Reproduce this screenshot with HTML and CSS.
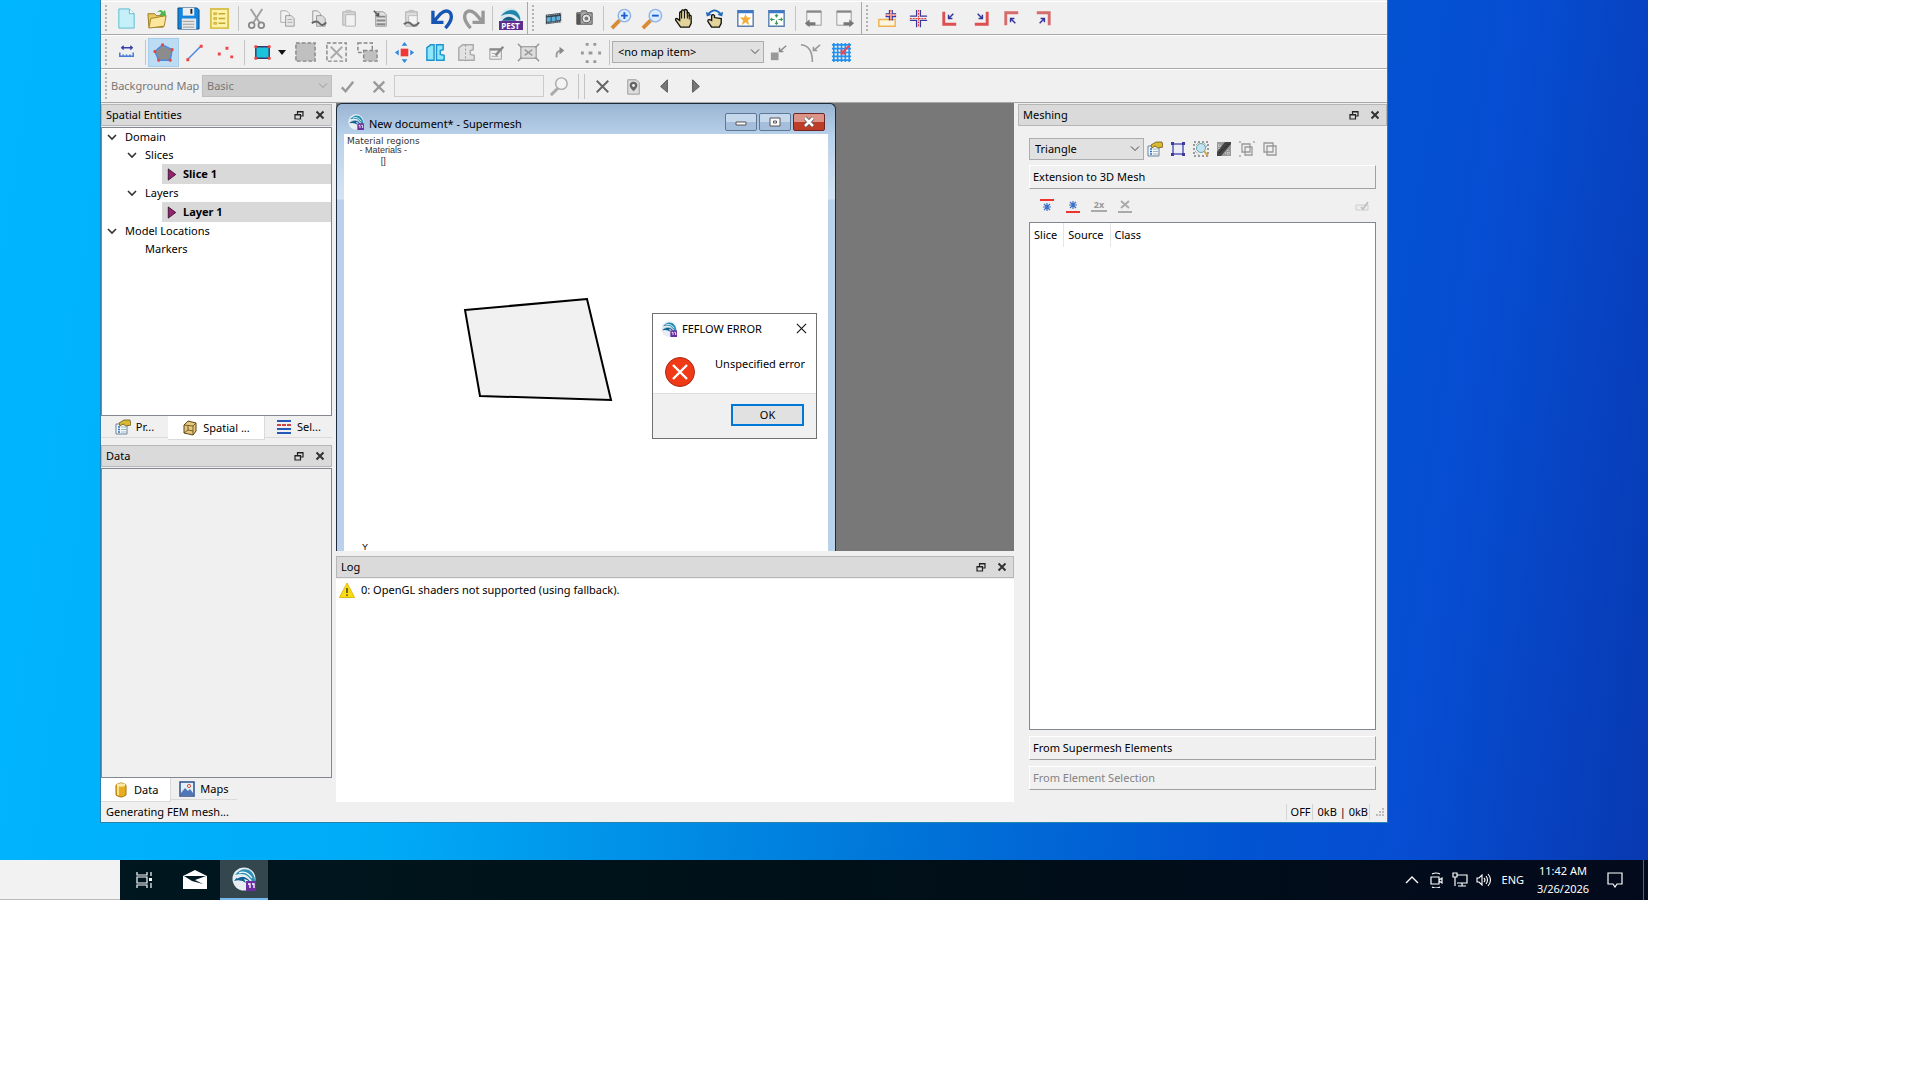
FILE: index.html
```html
<!DOCTYPE html>
<html lang="en">
<head>
  <meta charset="UTF-8" />
  <meta name="viewport" content="width=device-width, initial-scale=1.0"/>
  <title>FEFLOW - Supermesh</title>
  <link rel="stylesheet" href="styles.css">
</head>
<body>
  <!-- Shared icons -->
  <svg class="sprite" aria-hidden="true">
    <symbol id="logo" viewBox="0 0 24 24">
      <circle cx="12" cy="12" r="11.5" fill="#e6eef2"/>
      <path d="M3 8Q9 0 17 3Q22 6 23 13L21 20Q20 11 14 8Q9 6 3 8Z" fill="#2a91b5"/>
      <path d="M2 14Q6 8 12 9Q19 10 20 18Q16 12 12 12L14 16Q9 12 2 14Z" fill="#12618f"/>
      <path d="M7 6Q14 3 20 11M5 11Q12 6 19 14" fill="none" stroke="#fff" stroke-width="1.2"/>
      <path d="M14 14H24V24H14Z" fill="#6b2fa0"/>
      <path d="M16 17H18V21M20 17H22V21" fill="none" stroke="#fff" stroke-width="1.3"/>
    </symbol>
    <symbol id="float" viewBox="0 0 10 10">
      <path d="M3.500 4V1.500H9V6H7M3.500 2H9M1 4.500H6.500V9H1ZM1 5H6.500" fill="none" stroke="#222" stroke-width="1.200"/>
    </symbol>
    <symbol id="close" viewBox="0 0 10 10">
      <path d="M1.500 1.500L8.500 8.500M8.500 1.500L1.500 8.500" stroke="#333" stroke-width="2"/>
    </symbol>
    <symbol id="props" viewBox="0 0 16 16">
      <path d="M1 5H12V15H1Z" fill="#f4f8fc" stroke="#6d8296"/>
      <path d="M3 8H5M3 10.500H5M3 13H5" stroke="#2a70c0" stroke-width="1.300"/>
      <path d="M6 8H11M6 10.500H11M6 13H11" stroke="#9bb"/>
      <path d="M4 4L9 1L15 1L16 6L11 7L8 5L5 7Z" fill="#d9b832" stroke="#6b5a18" stroke-width=".8"/>
    </symbol>
    <symbol id="chevron" viewBox="0 0 10 10">
      <path d="M1 3L5 7L9 3" fill="none" stroke="#333" stroke-width="1.600"/>
    </symbol>
    <symbol id="arrow" viewBox="0 0 10 14">
      <path d="M1 1L9 7L1 13Z" fill="#98206c" stroke="#3b1030"/>
    </symbol>
    <symbol id="hand" viewBox="0 0 24 24">
      <path d="M9 21L4 14Q3 12 5 12L8 14V6Q9 4 10 6V4Q11 2 13 4V3Q15 2 16 4V6Q18 5 18 8V9Q20 8 20 10V17L18 21Z" fill="#e2d49b" stroke="#111" stroke-width="1.400"/>
      <path d="M10 6V12M13 4V12M16 5V12M18 8V13" stroke="#111" stroke-width="1.100"/>
    </symbol>
  </svg>

  <div class="desktop">
    <div class="workspace">
      <main class="app">
        <div class="toolbars">
          <div class="toolbar">
            <div class="group">
              <span class="handle"></span>
              <button class="tool" aria-label="New"><svg viewBox="0 0 24 24"><path d="M4 2H15L20 7V22H4Z" fill="#c5f0fa" stroke="#58bcd0"/><path d="M15 2V7H20" fill="#fff" stroke="#58bcd0"/></svg></button>
              <button class="tool" aria-label="Open"><svg viewBox="0 0 24 24"><path d="M2 7H9L11 9H18V21H3Z" fill="#e8c760" stroke="#9a7a20"/><path d="M5 12L21 9L19 20L3 22Z" fill="#fbe69c" stroke="#a5821f"/><path d="M11 6Q15 1 18 5L20 3L21 10L14 8L16 6Q14 4 11 6Z" fill="#4db650"/></svg></button>
              <button class="tool" aria-label="Save"><svg viewBox="0 0 24 24"><path d="M1 1H21L23 3V23H1Z" fill="#1185e0" stroke="#134a80"/><path d="M6 1H18V9H6Z" fill="#eee"/><path d="M14 2H16V7H14Z" fill="#222"/><path d="M5 12H20V23H5Z" fill="#e8e8e8"/><path d="M6 15H18M6 18H18M6 21H18" stroke="#999"/></svg></button>
              <button class="tool" aria-label="Problem settings"><svg viewBox="0 0 24 24"><path d="M3 2H21V22H3Z" fill="#fdf2a6" stroke="#d9c350" stroke-width="2"/><path d="M6 6H9V8H6ZM6 11H9V13H6ZM6 16H9V18H6Z" fill="#e8cf50" stroke="#b79c28" stroke-width=".6"/><path d="M11 7H18M11 12H18M11 17H18" stroke="#c6a92f" stroke-width="1.500"/></svg></button>
              <span class="sep"></span>
              <button class="tool" aria-label="Cut"><svg viewBox="0 0 24 24"><path d="M6 2L15 16M18 2L9 16" stroke="#a0a0a0" stroke-width="2"/><circle cx="7" cy="19" r="3" fill="none" stroke="#888" stroke-width="1.800"/><circle cx="17" cy="19" r="3" fill="none" stroke="#888" stroke-width="1.800"/></svg></button>
              <button class="tool" aria-label="Copy"><svg viewBox="0 0 24 24"><path d="M5 4H11L14 7V16H5Z" fill="#f2f2f2" stroke="#aaa"/><path d="M10 9H16L19 12V20H10Z" fill="#e6e6e6" stroke="#999"/><path d="M12 13H17M12 16H17" stroke="#aaa"/></svg></button>
              <button class="tool" aria-label="Copy map"><svg viewBox="0 0 24 24"><path d="M6 4H11L14 7V16H6Z" fill="#eee" stroke="#999"/><path d="M10 9H16L19 12V20H10Z" fill="#ddd" stroke="#999"/><path d="M5 17Q10 13 13 17T20 16" fill="none" stroke="#666" stroke-width="2"/></svg></button>
              <button class="tool" aria-label="Paste"><svg viewBox="0 0 24 24"><path d="M5 5H18V19H5Z" fill="#d8d8d8" stroke="#b0b0b0"/><path d="M8 3H14V6H8Z" fill="#c4c4c4"/><path d="M8 8H18V20H8Z" fill="#f2f2f2" stroke="#b4b4b4"/></svg></button>
              <button class="tool" aria-label="Paste values"><svg viewBox="0 0 24 24"><path d="M7 5H15L18 8V20H7Z" fill="#e2e2e2" stroke="#999"/><path d="M8 10H17M8 14H17M8 18H17" stroke="#888" stroke-width="2"/><path d="M5 4L10 9M10 6V9H7" stroke="#555" fill="none" stroke-width="1.500"/></svg></button>
              <button class="tool" aria-label="Paste map"><svg viewBox="0 0 24 24"><path d="M6 5H18V20H6Z" fill="#ddd" stroke="#aaa"/><path d="M9 3H15V6H9Z" fill="#c2c2c2"/><path d="M9 9H18V18H9Z" fill="#f4f4f4" stroke="#bbb"/><path d="M4 18Q9 14 12 18T20 16" fill="none" stroke="#666" stroke-width="2"/></svg></button>
              <button class="tool" aria-label="Undo"><svg viewBox="0 0 24 24"><path d="M2 4V16H13M3 15L10 7Q16 2 20 6Q24 12 15 22" fill="none" stroke="#1755b5" stroke-width="3.500"/></svg></button>
              <button class="tool" aria-label="Redo"><svg viewBox="0 0 24 24"><path d="M22 4V16H11M21 15L14 7Q8 2 4 6Q0 12 9 22" fill="none" stroke="#989898" stroke-width="3.500"/></svg></button>
              <span class="sep"></span>
              <button class="tool pest" aria-label="FePEST"><svg viewBox="0 0 24 14"><path d="M1 14Q1 1 12 1T23 14Z" fill="#dbe9ee"/><path d="M2 9Q10 0 18 4Q23 9 22 14Q17 6 10 7Q6 7 2 9Z" fill="#1f87ad"/><path d="M3 14Q9 7 16 12L18 14Z" fill="#1a5e86"/></svg><b>PEST</b></button>
            </div>
            <div class="group">
              <span class="handle"></span>
              <button class="tool" aria-label="Film"><svg viewBox="0 0 24 24"><path d="M4 8L20 6V16L4 18Z" fill="#344250"/><path d="M5 11L9 10.500V15L5 15.500ZM10 10.500L14 10V14.500L10 15ZM15 10L19 9.500V13.500L15 14Z" fill="#5fb2dd"/><path d="M5 9L20 7M5 17L20 15" stroke="#ccc" stroke-dasharray="1 1"/></svg></button>
              <button class="tool" aria-label="Snapshot"><svg viewBox="0 0 24 24"><path d="M4 6H8L9 4H14L15 6H20V18H4Z" fill="#a2a5a8" stroke="#555"/><path d="M4 7H8V18H4Z" fill="#555"/><circle cx="14" cy="12" r="4.500" fill="#e8e8e8" stroke="#555"/><circle cx="14" cy="12" r="2" fill="#777"/></svg></button>
              <span class="sep"></span>
              <button class="tool" aria-label="Zoom in"><svg viewBox="0 0 24 24"><path d="M2 22L10 14" stroke="#d98a35" stroke-width="4"/><circle cx="15" cy="9" r="6.500" fill="#dcecff" stroke="#8eb4e8" stroke-width="1.500"/><path d="M11.500 9H18.500M15 5.500V12.500" stroke="#1b5ecf" stroke-width="2"/></svg></button>
              <button class="tool" aria-label="Zoom out"><svg viewBox="0 0 24 24"><path d="M2 22L10 14" stroke="#d98a35" stroke-width="4"/><circle cx="15" cy="9" r="6.500" fill="#dcecff" stroke="#8eb4e8" stroke-width="1.500"/><path d="M11.500 9H18.500" stroke="#1b5ecf" stroke-width="2"/></svg></button>
              <button class="tool" aria-label="Pan"><svg><use href="#hand"/></svg></button>
              <button class="tool" aria-label="Rotate"><svg viewBox="0 0 24 24"><path d="M9 21L5 15Q5 12 9 14V9Q10 7 12 9V11L19 12V17L17 21Z" fill="#e2d49b" stroke="#111" stroke-width="1.400"/><path d="M6 7Q12 0 18 7" fill="none" stroke="#2068b8" stroke-width="2"/><path d="M3 5L4 10L9 8ZM21 5L20 10L15 8Z" fill="#2068b8"/></svg></button>
              <button class="tool" aria-label="Bookmark view"><svg viewBox="0 0 24 24"><path d="M4 4H20V20H4Z" fill="#fff" stroke="#5b7fae" stroke-width="1.500"/><path d="M4 5H20" stroke="#3c78c8" stroke-width="3"/><path d="M12 7L13.500 11H18L14.500 14L16 19L12 16L8 19L9.500 14L6 11H10.500Z" fill="#f3ac36"/></svg></button>
              <button class="tool" aria-label="Full view"><svg viewBox="0 0 24 24"><path d="M4 4H20V20H4Z" fill="#fff" stroke="#5b7fae" stroke-width="1.500"/><path d="M4 5H20" stroke="#3c78c8" stroke-width="3"/><path d="M12 8V11M12 14V18M6 13H10M14 13H18M10.500 9.500L12 8L13.500 9.500M10.500 16.500L12 18L13.500 16.500M7.500 11.500L6 13L7.500 14.500M16.500 11.500L18 13L16.500 14.500" fill="none" stroke="#3a9a50" stroke-width="1.200"/></svg></button>
              <span class="sep"></span>
              <button class="tool" aria-label="Previous view"><svg viewBox="0 0 24 24"><path d="M5 4H20V19H5Z" fill="#f4f4f4" stroke="#999"/><path d="M5 5H20" stroke="#888" stroke-width="2"/><path d="M3 17L8 13V16H14V19H8V21Z" fill="#777"/></svg></button>
              <button class="tool" aria-label="Next view"><svg viewBox="0 0 24 24"><path d="M4 4H19V19H4Z" fill="#f4f4f4" stroke="#999"/><path d="M4 5H19" stroke="#888" stroke-width="2"/><path d="M22 17L17 13V16H11V19H17V21Z" fill="#777"/></svg></button>
            </div>
            <div class="group last">
              <span class="handle"></span>
              <button class="tool" aria-label="Add section"><svg viewBox="0 0 24 24"><path d="M3 13H20V20H3Z" fill="#fff4e0" stroke="#efb24c" stroke-width="1.500"/><path d="M14 3V7H10M17 3V7H21M14 14V10H10M17 14V10H21" fill="none" stroke="#39399b" stroke-width="1.200"/><path d="M15.500 3V14M10 8.500H21" stroke="#e33" stroke-dasharray="2 1"/></svg></button>
              <button class="tool" aria-label="Center section"><svg viewBox="0 0 24 24"><path d="M10 3V9.500H3M14 3V9.500H21M10 21V14H3M14 21V14H21" fill="none" stroke="#39399b" stroke-width="1.300"/><path d="M12 3V21M3 12H21" stroke="#e33" stroke-width="1.200" stroke-dasharray="2 1"/></svg></button>
              <button class="tool" aria-label="Bottom left"><svg viewBox="0 0 24 24"><path d="M6 5V18H19" fill="none" stroke="#dd5050" stroke-width="3"/><path d="M16 7L11 12M11 8V12H15" fill="none" stroke="#33339b" stroke-width="1.500"/></svg></button>
              <button class="tool" aria-label="Bottom right"><svg viewBox="0 0 24 24"><path d="M19 5V18H6" fill="none" stroke="#dd5050" stroke-width="3"/><path d="M9 7L14 12M14 8V12H10" fill="none" stroke="#33339b" stroke-width="1.500"/></svg></button>
              <button class="tool" aria-label="Top left"><svg viewBox="0 0 24 24"><path d="M6 19V6H19" fill="none" stroke="#d46c6c" stroke-width="3"/><path d="M16 17L11 12M11 16V12H15" fill="none" stroke="#33339b" stroke-width="1.500"/></svg></button>
              <button class="tool" aria-label="Top right"><svg viewBox="0 0 24 24"><path d="M19 19V6H6" fill="none" stroke="#d46c6c" stroke-width="3"/><path d="M9 17L14 12M14 16V12H10" fill="none" stroke="#33339b" stroke-width="1.500"/></svg></button>
            </div>
          </div>

          <div class="toolbar">
            <div class="group last">
              <span class="handle"></span>
              <button class="tool" aria-label="Measure"><svg viewBox="0 0 24 24"><path d="M7 7H18M9 5L7 7L9 9M16 5L18 7L16 9" fill="none" stroke="#3b3bab" stroke-width="1.400"/><path d="M5 12V16H19V12M8.500 14V16M12 14V16M15.500 14V16" fill="none" stroke="#477bd8" stroke-width="1.600"/></svg></button>
              <span class="sep"></span>
              <button class="tool active" aria-label="Polygon"><svg viewBox="0 0 24 24"><path d="M11 4L21 9L19 20H7L3 11Z" fill="#8c8c8c" stroke="#4a8ae0" stroke-width="1.500"/><path d="M10 3H12V5H10ZM20 8H22V10H20ZM18 19H20V21H18ZM6 19H8V21H6ZM2 10H4V12H2Z" fill="#e44" stroke="#e44"/></svg></button>
              <button class="tool" aria-label="Line"><svg viewBox="0 0 24 24"><path d="M5 19L18 6" stroke="#4a8ae0" stroke-width="1.600"/><path d="M3.500 18H6.500V21H3.500ZM17.500 4H20.500V7H17.500Z" fill="#e44"/></svg></button>
              <button class="tool" aria-label="Point"><svg viewBox="0 0 24 24"><path d="M4 12H7V15H4ZM12 6H15V9H12ZM17 15H20V18H17Z" fill="#e44"/></svg></button>
              <span class="sep"></span>
              <button class="tool" aria-label="Rectangle"><svg viewBox="0 0 24 24"><path d="M5 6H19V18H5Z" fill="#1cc3dc" stroke="#333c6a" stroke-width="1.500"/><path d="M4 5H6V7H4ZM18 5H20V7H18ZM4 17H6V19H4ZM18 17H20V19H18Z" fill="#e44" stroke="#e44"/></svg></button>
              <button class="drop" aria-label="More shapes"><svg viewBox="0 0 8 5"><path d="M0 0H8L4 5Z" fill="#111"/></svg></button>
              <button class="tool" aria-label="Select all"><svg viewBox="0 0 24 24"><path d="M2 2H22V21H2Z" fill="#c0c0c0" stroke="#888" stroke-width="1.500" stroke-dasharray="4 2"/></svg></button>
              <button class="tool" aria-label="Clear selection"><svg viewBox="0 0 24 24"><path d="M2 2H22V21H2Z" fill="none" stroke="#888" stroke-width="1.500" stroke-dasharray="4 2"/><path d="M6 6L18 18M18 6L6 18" stroke="#aaa" stroke-width="2"/></svg></button>
              <button class="tool" aria-label="Invert selection"><svg viewBox="0 0 24 24"><path d="M2 2H17V12H2Z" fill="none" stroke="#888" stroke-width="1.500" stroke-dasharray="4 2"/><path d="M8 10H22V21H8Z" fill="#c0c0c0" stroke="#888" stroke-width="1.500" stroke-dasharray="4 2"/></svg></button>
              <span class="sep"></span>
              <button class="tool" aria-label="Move"><svg viewBox="0 0 24 24"><path d="M8 8H16V16H8Z" fill="#ee3838"/><path d="M12 1L15 5H9ZM12 23L15 19H9ZM2 12L6 9V15ZM22 12L18 9V15Z" fill="#2d87dc"/></svg></button>
              <button class="tool" aria-label="Split"><svg viewBox="0 0 24 24"><path d="M10.500 4H7L3 7V20H10.500ZM13 4H20V9L17 10V14L21 15V20H13Z" fill="#8ce7f8" stroke="#1d93cf" stroke-width="1.500"/></svg></button>
              <button class="tool" aria-label="Join"><svg viewBox="0 0 24 24"><path d="M4 7L8 4H19V9L16 10V14L20 15V20H4Z" fill="#e2e2e2" stroke="#aaa" stroke-width="1.500"/><path d="M11 4V21" stroke="#999" stroke-dasharray="2 2"/></svg></button>
              <button class="tool" aria-label="Edit"><svg viewBox="0 0 24 24"><path d="M4 8H16V19H4Z" fill="#f0f0f0" stroke="#999"/><path d="M4 9H16" stroke="#888" stroke-width="2"/><path d="M10 15L18 6" stroke="#888" stroke-width="2.500"/><path d="M6 13H10M6 16H13" stroke="#aaa"/></svg></button>
              <button class="tool" aria-label="Scale"><svg viewBox="0 0 24 24"><path d="M4 6H20V18H4Z" fill="#ddd" stroke="#888"/><path d="M1 3L5 7M23 3L19 7M1 21L5 17M23 21L19 17M8 9L16 15M16 9L8 15" stroke="#999" stroke-width="1.500"/></svg></button>
              <button class="tool" aria-label="Rotate item"><svg viewBox="0 0 24 24"><path d="M9 17Q8 10 14 10" fill="none" stroke="#999" stroke-width="2"/><path d="M12 6L17 10L12 14Z" fill="#888"/></svg></button>
              <button class="tool" aria-label="Distribute"><svg viewBox="0 0 24 24"><path d="M7 2H10V5H7ZM15 2H18V5H15ZM2 11H5V14H2ZM10 11H14V14H10ZM20 11H23V14H20ZM7 20H10V23H7ZM15 20H18V23H15Z" fill="#999"/></svg></button>
              <span class="sep"></span>
              <select class="combo map-item" aria-label="Map item"><option>&lt;no map item&gt;</option></select>
              <button class="tool" aria-label="Snap to point"><svg viewBox="0 0 24 24"><path d="M3 12H11V20H3Z" fill="#999"/><path d="M19 5L12 11M12 7V11H16" fill="none" stroke="#888" stroke-width="1.500"/></svg></button>
              <button class="tool" aria-label="Snap to line"><svg viewBox="0 0 24 24"><path d="M2 4Q14 5 14 22M22 4L15 10M15 6V10H19" fill="none" stroke="#999" stroke-width="1.600"/></svg></button>
              <button class="tool" aria-label="Snap to grid"><svg viewBox="0 0 24 24"><path d="M2 4H22M2 8H22M2 12H22M2 16H22M2 20H22M4 2V22M8 2V22M12 2V22M16 2V22M20 2V22" stroke="#2291f0" stroke-width="1.700"/><path d="M20 5L12 13M12 9V13H16" fill="none" stroke="#e34b5c" stroke-width="2"/></svg></button>
            </div>
          </div>

          <div class="toolbar">
            <div class="group last">
              <span class="handle"></span>
              <label class="map-label" for="bgMap">Background Map</label>
              <select id="bgMap" class="combo bg-map" disabled><option>Basic</option></select>
              <button class="tool" aria-label="Apply"><svg viewBox="0 0 24 24"><path d="M6 13L10 17L18 7" fill="none" stroke="#999" stroke-width="2.500"/></svg></button>
              <button class="tool" aria-label="Discard"><svg viewBox="0 0 24 24"><path d="M7 7L18 18M18 7L7 18" stroke="#999" stroke-width="2.500"/></svg></button>
              <input class="search" type="text" aria-label="Search map" disabled>
              <button class="tool" aria-label="Search"><svg viewBox="0 0 24 24"><path d="M3 21L10 14" stroke="#aaa" stroke-width="3"/><circle cx="14" cy="9" r="6" fill="#f4f4f4" stroke="#aaa" stroke-width="1.500"/></svg></button>
              <span class="sep"></span><span class="sep"></span>
              <button class="tool" aria-label="Remove"><svg viewBox="0 0 24 24"><path d="M6 6L18 18M18 6L6 18" stroke="#666" stroke-width="2"/></svg></button>
              <button class="tool" aria-label="Location"><svg viewBox="0 0 24 24"><path d="M6 5H15L18 8V20H6Z" fill="#ddd" stroke="#999"/><path d="M12 17Q8 13 8 11A4 4 0 0 1 16 11Q16 13 12 17Z" fill="#666"/><circle cx="12" cy="11" r="1.500" fill="#eee"/></svg></button>
              <button class="tool" aria-label="Previous"><svg viewBox="0 0 24 24"><path d="M15 5V18L8 12Z" fill="#777" stroke="#555"/></svg></button>
              <button class="tool" aria-label="Next"><svg viewBox="0 0 24 24"><path d="M9 5V18L16 12Z" fill="#777" stroke="#555"/></svg></button>
            </div>
          </div>
        </div>

        <div class="content">
          <aside class="left">
            <section class="dock entities">
              <header class="dock-title"><h2>Spatial Entities</h2><button aria-label="Float"><svg><use href="#float"/></svg></button><button aria-label="Close"><svg><use href="#close"/></svg></button></header>
              <ul class="tree pane">
                <li><svg><use href="#chevron"/></svg>Domain</li>
                <li class="level-2"><svg><use href="#chevron"/></svg>Slices</li>
                <li class="selected"><svg><use href="#arrow"/></svg>Slice 1</li>
                <li class="level-2"><svg><use href="#chevron"/></svg>Layers</li>
                <li class="selected"><svg><use href="#arrow"/></svg>Layer 1</li>
                <li><svg><use href="#chevron"/></svg>Model Locations</li>
                <li class="leaf">Markers</li>
              </ul>
              <div class="tabs">
                <button class="tab"><svg><use href="#props"/></svg>Pr...</button>
                <button class="tab current"><svg viewBox="0 0 16 16"><path d="M2 5L6 1L14 3L14 11L11 15L2 13Z" fill="#e6c77c" stroke="#5b4517"/><path d="M2 5L11 6L14 3M11 6V15M6 6V10L2 13M6 10L11 11" fill="none" stroke="#5b4517" stroke-width=".8"/></svg>Spatial ...</button>
                <button class="tab"><svg viewBox="0 0 16 16"><path d="M1 2H15M1 10H15M1 14H15" stroke="#2559b8" stroke-width="2"/><path d="M1 6H15" stroke="#c44" stroke-width="2" stroke-dasharray="4 1"/></svg>Sel...</button>
              </div>
            </section>
            <section class="dock data">
              <header class="dock-title"><h2>Data</h2><button aria-label="Float"><svg><use href="#float"/></svg></button><button aria-label="Close"><svg><use href="#close"/></svg></button></header>
              <div class="pane empty"></div>
              <div class="tabs">
                <button class="tab current"><svg viewBox="0 0 16 16"><path d="M3 3Q8 -1 13 3V13Q8 17 3 13Z" fill="#e8ac20" stroke="#a87510"/><path d="M5 4V13" stroke="#fbe28e" stroke-width="2"/><ellipse cx="8" cy="3" rx="4.500" ry="1.700" fill="#fce9a5"/></svg>Data</button>
                <button class="tab"><svg viewBox="0 0 16 16"><path d="M1 1H15V15H1Z" fill="#e4effc" stroke="#2c4f8c" stroke-width="1.500"/><path d="M2 12L6 7L9 10L11 8L14 12V14H2Z" fill="#5078b8"/><circle cx="10" cy="5" r="1.600" fill="none" stroke="#d65430"/></svg>Maps</button>
              </div>
            </section>
          </aside>

          <div class="center">
            <div class="mdi">
              <section class="subwindow">
                <header class="sub-title">
                  <svg><use href="#logo"/></svg>
                  <h2>New document* - Supermesh</h2>
                  <button aria-label="Minimize"><svg viewBox="0 0 14 12"><path d="M2 6H12V9H2Z" fill="#fff" stroke="#555"/></svg></button>
                  <button aria-label="Maximize"><svg viewBox="0 0 14 12"><path d="M2 2H12V10H2ZM5.500 5H8.500V7H5.500Z" fill="#fff" stroke="#555"/></svg></button>
                  <button class="red" aria-label="Close"><svg viewBox="0 0 14 12"><path d="M3 2L11 10M11 2L3 10" stroke="#555" stroke-width="4"/><path d="M3 2L11 10M11 2L3 10" stroke="#fff" stroke-width="2.500"/></svg></button>
                </header>
                <div class="canvas">
                  <div class="legend">
                    <p class="legend-title">Material regions</p>
                    <p>- Materials -</p>
                    <p class="legend-box">[]</p>
                  </div>
                  <svg class="shape" viewBox="0 0 150 105" aria-hidden="true"><path d="M2 12L124 1L148 102L17 98Z" fill="#f1f1f1" stroke="#000" stroke-width="2"/></svg>
                  <span class="axis">Y</span>
                </div>
              </section>
              <div class="dialog" role="alertdialog" aria-labelledby="errTitle" aria-describedby="errText">
                <header class="dialog-title">
                  <svg><use href="#logo"/></svg>
                  <h2 id="errTitle">FEFLOW ERROR</h2>
                  <button aria-label="Close"><svg viewBox="0 0 12 12"><path d="M1 1L11 11M11 1L1 11" stroke="#111" stroke-width="1.200"/></svg></button>
                </header>
                <div class="dialog-body">
                  <svg viewBox="0 0 32 32"><circle cx="16" cy="16" r="14.500" fill="#f03a17" stroke="#a82a14"/><path d="M9 9L23 23M23 9L9 23" stroke="#fff" stroke-width="2.400"/></svg>
                  <p id="errText">Unspecified error</p>
                </div>
                <footer class="dialog-footer"><button>OK</button></footer>
              </div>
            </div>
            <section class="dock log">
              <header class="dock-title"><h2>Log</h2><button aria-label="Float"><svg><use href="#float"/></svg></button><button aria-label="Close"><svg><use href="#close"/></svg></button></header>
              <div class="log-body">
                <p><svg viewBox="0 0 16 16"><path d="M8 1L15.500 15.500H.5Z" fill="#fbdc12" stroke="#e2b90c"/><path d="M8 6V11M8 12.500V14" stroke="#333" stroke-width="1.400"/></svg>0: OpenGL shaders not supported (using fallback).</p>
              </div>
            </section>
          </div>

          <aside class="dock meshing">
            <header class="dock-title"><h2>Meshing</h2><button aria-label="Float"><svg><use href="#float"/></svg></button><button aria-label="Close"><svg><use href="#close"/></svg></button></header>
            <div class="mesh-body">
              <div class="mesh-row">
                <select class="combo triangle" aria-label="Mesh generator"><option>Triangle</option></select>
                <button aria-label="Generator properties"><svg><use href="#props"/></svg></button>
                <button aria-label="Supermesh"><svg viewBox="0 0 16 16"><path d="M3 3H13V13H3Z" fill="#ececf4" stroke="#5a5ab8" stroke-width="1.500"/><path d="M1 1H4V4H1ZM12 1H15V4H12ZM1 12H4V15H1ZM12 12H15V15H12Z" fill="#3a3aa0"/></svg></button>
                <button aria-label="Refine"><svg viewBox="0 0 16 16"><path d="M1 1H15V15H1Z" fill="none" stroke="#999" stroke-width="2" stroke-dasharray="2 2"/><path d="M3 4L6 1M11 2L14 6M2 10L6 14" stroke="#888" stroke-dasharray="1 1"/><circle cx="8" cy="7" r="4.500" fill="#c4e2f2" stroke="#6aa"/><path d="M11 10L15 15" stroke="#d4a240" stroke-width="2"/></svg></button>
                <button aria-label="Density"><svg viewBox="0 0 16 16"><path d="M1 1H15V15H1Z" fill="#999"/><path d="M1 11L9 1H15V3L5 15H1Z" fill="#444"/><path d="M2 5H5M9 12H14M3 3V8M12 9V14" stroke="#ddd" stroke-dasharray="1 1"/><path d="M3 12L13 3" stroke="#222" stroke-dasharray="2 1"/></svg></button>
                <button aria-label="Group"><svg viewBox="0 0 16 16"><path d="M3 3H11V11H3ZM6 6H13V14H6Z" fill="none" stroke="#999" stroke-width="1.300"/><path d="M0 0H2V2H0ZM14 0H16V2H14ZM0 14H2V16H0Z" fill="#bbb"/></svg></button>
                <button aria-label="Ungroup"><svg viewBox="0 0 16 16"><path d="M2 2H11V11H2ZM5 5H14V14H5Z" fill="none" stroke="#999" stroke-width="1.300"/></svg></button>
              </div>
              <button class="bar">Extension to 3D Mesh</button>
              <div class="slice-tools">
                <button aria-label="Add slice on top"><svg viewBox="0 0 16 16"><path d="M1 2H15" stroke="#e33" stroke-width="2"/><path d="M8 5V13M4 9H12M5 6L11 12M11 6L5 12" stroke="#3a70c8" stroke-width="1.200"/></svg></button>
                <button aria-label="Add slice at bottom"><svg viewBox="0 0 16 16"><path d="M1 14H15" stroke="#e33" stroke-width="2"/><path d="M8 3V11M4 7H12M5 4L11 10M11 4L5 10" stroke="#3a70c8" stroke-width="1.200"/></svg></button>
                <button class="twice">2x</button>
                <button aria-label="Delete slice"><svg viewBox="0 0 16 16"><path d="M1 14H15" stroke="#aaa" stroke-width="2"/><path d="M4 3L12 10M12 3L4 10" stroke="#aaa" stroke-width="2"/></svg></button>
                <button class="push" aria-label="Edit slice"><svg viewBox="0 0 16 16"><path d="M1 7H13V12H1Z" fill="#eee" stroke="#ccc"/><path d="M6 9L8 11L13 4" fill="none" stroke="#bbb" stroke-width="1.500"/></svg></button>
              </div>
              <div class="table-box">
                <table>
                  <thead><tr><th>Slice</th><th>Source</th><th>Class</th></tr></thead>
                </table>
              </div>
              <button class="bar">From Supermesh Elements</button>
              <button class="bar" disabled>From Element Selection</button>
            </div>
          </aside>
        </div>

        <footer class="status">
          <span class="message">Generating FEM mesh...</span>
          <span class="cell">OFF</span>
          <span class="cell memory">0kB | 0kB</span>
          <svg viewBox="0 0 10 10"><path d="M7 1H9V3H7ZM4 4H6V6H4ZM7 4H9V6H7ZM1 7H3V9H1ZM4 7H6V9H4ZM7 7H9V9H7Z" fill="#bbb"/></svg>
        </footer>
      </main>
    </div>

    <nav class="taskbar" aria-label="Taskbar">
      <input class="task-search" type="text" aria-label="Search Windows">
      <button class="task" aria-label="Task view"><svg viewBox="0 0 24 24"><path d="M4 4V7H14V4M4 20V17H14V20M4 9H14V15H4ZM18 4V8M18 15V20" fill="none" stroke="#fff" stroke-width="1.200"/><path d="M16 10H19V13H16Z" fill="#fff"/></svg></button>
      <button class="task mail" aria-label="Mail"><svg viewBox="0 0 24 20"><path d="M0 6L12 0L24 6V19H0Z" fill="#fff"/><path d="M1 6H23L12 10L20 14L9 11Z" fill="#001820"/></svg></button>
      <button class="task running" aria-label="FEFLOW"><svg><use href="#logo"/></svg></button>
      <div class="tray">
        <button aria-label="Hidden icons"><svg viewBox="0 0 16 16"><path d="M2 11L8 5L14 11" fill="none" stroke="#fff" stroke-width="1.400"/></svg></button>
        <button aria-label="Meet now"><svg viewBox="0 0 16 16"><path d="M3 5H11V12H3ZM11 8L14 6V11L11 9M4 2Q8 0 12 2M4 15Q8 17 12 15" fill="none" stroke="#fff" stroke-width="1.200"/></svg></button>
        <button aria-label="Network"><svg viewBox="0 0 16 16"><path d="M5 3H15V11H5M10 11V14M6 14H14M1 1H5V5H1ZM3 5V14" fill="none" stroke="#fff" stroke-width="1.200"/></svg></button>
        <button aria-label="Volume"><svg viewBox="0 0 16 16"><path d="M1 6H3L6 3V13L3 10H1ZM8 6Q10 8 8 10M10 4Q13 8 10 12M12 2Q17 8 12 14" fill="none" stroke="#fff" stroke-width="1.100"/></svg></button>
        <button class="lang">ENG</button>
        <button class="clock"><span>11:42 AM</span><span>3/26/2026</span></button>
        <button class="notify" aria-label="Notifications"><svg viewBox="0 0 16 16"><path d="M1 1H15V12H10L8 15L6 12H1Z" fill="none" stroke="#fff" stroke-width="1.200"/></svg></button>
      </div>
    </nav>
  </div>
</body>
</html>
```
FILE: styles.css
```css
* {
  box-sizing: border-box;
}

body {
  font-family: 'Noto Sans', 'Open Sans', sans-serif;
  font-size: 11px;
  line-height: 16px;
  margin: 0;
  padding: 0 272px 180px 0;
  height: 100vh;
  background-color: #fff;
  color: #000;
}

h2, p, ul {
  margin: 0;
  padding: 0;
  font-size: inherit;
  font-weight: normal;
}

button, select, input {
  font: inherit;
  color: inherit;
  margin: 0;
  padding: 0;
  border: none;
  border-radius: 0;
  background: none;
}

svg {
  display: block;
  flex-shrink: 0;
}

.sprite {
  position: absolute;
  width: 0;
  height: 0;
}

.desktop {
  height: 100%;
  display: flex;
  flex-direction: column;
  background: linear-gradient(98deg, #00b6ff 0%, #00abf6 28%, #0074d8 58%, #0254d2 76%, #064dd2 86%, #0838b0 100%);
}

.workspace {
  flex: 1;
  min-height: 0;
  padding: 0 260px 37px 100px;
}

.app {
  height: 100%;
  display: flex;
  flex-direction: column;
  background-color: #f0f0f0;
  border: 1px solid #2583ad;
  border-top: none;
}

/* Toolbars */
.toolbars {
  padding-top: 1px;
}

.toolbar {
  display: flex;
  height: 34px;
  border-top: 1px solid #fff;
  border-bottom: 1px solid #a8a8a8;
}

.group {
  display: flex;
  align-items: center;
  padding-right: 1px;
  border-right: 1px solid #a8a8a8;
}

.group.last {
  border-right: none;
}

.handle {
  width: 3px;
  height: 26px;
  margin: 0 3px 0 4px;
  border-left: 2px dotted #b4b4b4;
}

.tool {
  width: 31px;
  height: 29px;
  display: flex;
  flex-direction: column;
  align-items: center;
  justify-content: center;
}

.tool svg {
  width: 23px;
  height: 23px;
}

.tool.active {
  background-color: #bcdcf4;
  border: 1px solid #a5cdec;
}

.pest svg {
  height: 14px;
}

.pest b {
  width: 24px;
  background-color: #5b2d91;
  color: #fff;
  font-size: 8px;
  line-height: 9px;
}

.drop {
  width: 12px;
}

.drop svg {
  width: 8px;
  height: 5px;
}

.sep {
  width: 1px;
  height: 25px;
  margin: 0 2px 0 3px;
  background-color: #c4c4c4;
}

.combo {
  height: 22px;
  padding: 0 20px 0 5px;
  border: 1px solid #adadad;
  background: #e1e1e1 url("data:image/svg+xml,%3Csvg xmlns='http://www.w3.org/2000/svg' width='10' height='6'%3E%3Cpath d='M1 0.500L5 4.500L9 0.500' fill='none' stroke='%23444'/%3E%3C/svg%3E") no-repeat right 3px center;
  appearance: none;
}

.map-item {
  width: 152px;
}

.map-label {
  width: 91px;
  color: #777;
  white-space: nowrap;
}

.bg-map {
  width: 130px;
  padding-left: 4px;
  color: #777;
  background-color: #ccc;
  background-image: url("data:image/svg+xml,%3Csvg xmlns='http://www.w3.org/2000/svg' width='10' height='6'%3E%3Cpath d='M1 0.500L5 4.500L9 0.500' fill='none' stroke='%23999'/%3E%3C/svg%3E");
  border-color: #bfbfbf;
  opacity: 1;
}

.search {
  width: 150px;
  height: 22px;
  border: 1px solid #ccc;
  background-color: #f0f0f0;
}

/* Docks */
.content {
  flex: 1;
  min-height: 0;
  display: flex;
  gap: 4px;
}

.left {
  width: 231px;
  display: flex;
  flex-direction: column;
  gap: 5px;
  padding-top: 1px;
}

.dock {
  display: flex;
  flex-direction: column;
}

.entities {
  height: 336px;
}

.data {
  flex: 1;
  min-height: 0;
}

.dock-title {
  height: 22px;
  flex-shrink: 0;
  display: flex;
  align-items: center;
  padding: 0 4px;
  background-color: #dadada;
  border: 1px solid #b6b6b6;
}

.dock-title h2 {
  flex: 1;
}

.dock-title button {
  width: 12px;
  margin-left: 9px;
}

.dock-title svg {
  width: 10px;
  height: 10px;
}

.pane {
  flex: 1;
  min-height: 0;
  margin-top: 1px;
  border: 1px solid #828790;
}

.tree {
  list-style: none;
  background-color: #fff;
}

.tree li {
  height: 18px;
  display: flex;
  align-items: center;
  gap: 8px;
  padding-left: 5px;
}

.tree svg {
  width: 10px;
  height: 10px;
}

.tree .level-2 {
  padding-left: 25px;
}

.tree .leaf {
  padding-left: 43px;
}

.tree .selected {
  height: 20px;
  gap: 6px;
  margin-left: 60px;
  background-color: #d9d9d9;
  font-weight: bold;
}

.tree .selected svg {
  height: 13px;
}

.tabs {
  height: 24px;
  display: flex;
  align-items: flex-start;
}

.tab {
  height: 22px;
  display: flex;
  align-items: center;
  justify-content: center;
  gap: 5px;
  padding: 0 8px;
  border-bottom: 1px solid #dadada;
  white-space: nowrap;
}

.tab.current {
  height: 24px;
  padding: 0 12px;
  background-color: #fff;
  border-right: 1px solid #dadada;
}

.tab svg {
  width: 16px;
  height: 16px;
}

.entities .tabs {
  display: grid;
  grid-template-columns: 67fr 97fr 67fr;
}

/* Documents and log */
.center {
  flex: 1;
  min-width: 0;
  display: flex;
  flex-direction: column;
  gap: 5px;
}

.mdi {
  position: relative;
  flex: 1;
  min-height: 0;
  background-color: #787878;
}

.subwindow {
  width: 500px;
  height: 100%;
  display: flex;
  flex-direction: column;
  padding: 0 7px;
  background: linear-gradient(#9ab5d3, #b9d1ea 32px, #d5e4f3 95px, #b9d1ea 96px);
  border: 1px solid #1d2c3d;
  border-bottom: none;
  border-radius: 6px 6px 0 0;
}

.sub-title {
  height: 30px;
  flex-shrink: 0;
  display: flex;
  align-items: center;
  gap: 2px;
  padding: 5px 3px 0 4px;
}

.sub-title h2 {
  flex: 1;
  padding: 5px 0 0 3px;
}

.sub-title > svg {
  width: 16px;
  height: 16px;
}

.sub-title button {
  width: 32px;
  height: 18px;
  display: flex;
  align-items: center;
  justify-content: center;
  border: 1px solid #5f7896;
  border-radius: 2px;
  background: linear-gradient(#c5d8ec 50%, #a4bedb 50%);
}

.sub-title .red {
  border-color: #6d2525;
  background: linear-gradient(#dd9488 50%, #bd3d27 50%);
}

.sub-title button svg {
  width: 14px;
  height: 12px;
}

.canvas {
  flex: 1;
  min-height: 0;
  display: flex;
  flex-direction: column;
  overflow: hidden;
  background-color: #fff;
}

.legend {
  align-self: flex-start;
  padding: 3px 0 0 3px;
  font-family: 'Liberation Sans', sans-serif;
  font-size: 9px;
  line-height: 9px;
  text-align: center;
  color: #333;
}

.legend-title {
  font-family: 'DejaVu Sans', sans-serif;
}

.legend-box {
  padding-top: 2px;
}

.shape {
  width: 150px;
  height: 105px;
  margin: 132px 0 0 119px;
}

.axis {
  margin-top: auto;
  padding-left: 18px;
  font-family: 'Liberation Sans', sans-serif;
  font-size: 9px;
  line-height: 8px;
}

.log {
  height: 246px;
}

.log-body {
  flex: 1;
  margin-top: 1px;
  padding: 3px;
  background-color: #fff;
}

.log-body p {
  display: flex;
  align-items: center;
  gap: 6px;
}

.log-body svg {
  width: 16px;
  height: 16px;
}

/* Error message over the document area */
.dialog {
  position: absolute;
  left: 316px;
  top: 210px;
  width: 165px;
  background-color: #fff;
  border: 1px solid #707070;
}

.dialog-title {
  height: 29px;
  display: flex;
  align-items: center;
  gap: 5px;
  padding: 0 9px 0 8px;
}

.dialog-title h2 {
  flex: 1;
}

.dialog-title svg {
  width: 16px;
  height: 16px;
}

.dialog-title button svg {
  width: 11px;
  height: 11px;
}

.dialog-body {
  height: 50px;
  display: flex;
  justify-content: space-between;
  padding: 13px 11px 0;
  white-space: nowrap;
}

.dialog-body svg {
  width: 32px;
  height: 32px;
}

.dialog-footer {
  display: flex;
  justify-content: flex-end;
  padding: 10px 12px 12px;
  background-color: #f0f0f0;
  border-top: 1px solid #dfdfdf;
}

.dialog-footer button {
  width: 73px;
  height: 22px;
  line-height: 18px;
  background-color: #e1e1e1;
  border: 2px solid #0078d7;
}

/* Meshing */
.meshing {
  width: 369px;
  padding-top: 1px;
}

.mesh-body {
  flex: 1;
  min-height: 0;
  display: flex;
  flex-direction: column;
  padding: 12px 11px;
}

.mesh-row {
  display: flex;
  align-items: center;
  gap: 7px;
  margin-bottom: 5px;
}

.mesh-row svg,
.slice-tools svg {
  width: 16px;
  height: 16px;
}

.triangle {
  width: 115px;
  margin-right: -4px;
}

.bar {
  height: 24px;
  flex-shrink: 0;
  padding: 0 3px;
  text-align: left;
  border: 1px solid;
  border-color: #fff #a0a0a0 #a0a0a0 #fff;
}

.bar:disabled {
  color: #838383;
}

.bar + .bar {
  margin-top: 6px;
}

.slice-tools {
  height: 33px;
  display: flex;
  align-items: center;
  gap: 10px;
  padding: 0 5px 0 10px;
}

.twice {
  width: 16px;
  font-size: 9px;
  font-weight: bold;
  line-height: 11px;
  color: #999;
  border-bottom: 2px solid #aaa;
}

.push {
  margin-left: auto;
}

.table-box {
  flex: 1;
  min-height: 0;
  margin-bottom: 6px;
  background-color: #fff;
  border: 1px solid #828790;
}

table {
  border-collapse: collapse;
}

th {
  height: 24px;
  padding: 0 6px 0 4px;
  font-weight: normal;
  text-align: left;
  border-right: 1px solid #e5e5e5;
}

th:last-child {
  border-right: none;
}

.status {
  height: 20px;
  display: flex;
  align-items: center;
  padding: 0 2px 0 5px;
}

.message {
  flex: 1;
}

.cell {
  padding: 0 1px 0 4px;
  border-left: 1px solid #d4d4d4;
}

.memory {
  padding-left: 5px;
  border-right: 1px solid #d4d4d4;
}

.status svg {
  width: 10px;
  height: 10px;
  margin-left: 5px;
}

/* Taskbar */
.taskbar {
  height: 40px;
  display: flex;
  background: linear-gradient(to right, #001820, #001018 50%, #030a1c);
  color: #fff;
}

.task-search {
  width: 120px;
  background-color: #f2f2f2;
  border-bottom: 1px solid #bbb;
}

.task {
  width: 50px;
  display: flex;
  align-items: center;
  justify-content: center;
}

.task svg {
  width: 24px;
  height: 24px;
}

.task.mail svg {
  height: 20px;
}

.task.running {
  width: 48px;
  background-color: #34474f;
  border-bottom: 2px solid #76b9ed;
}

.tray {
  margin-left: auto;
  display: flex;
  align-items: center;
  gap: 8px;
  padding-right: 4px;
}

.tray svg {
  width: 16px;
  height: 16px;
}

.lang {
  padding-left: 2px;
}

.clock {
  width: 62px;
  display: flex;
  flex-direction: column;
  align-items: center;
  line-height: 18px;
}

.notify {
  height: 40px;
  padding: 0 20px 0 5px;
  border-right: 1px solid #59606c;
}
```
